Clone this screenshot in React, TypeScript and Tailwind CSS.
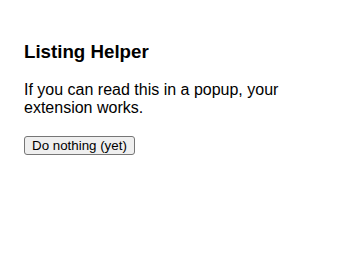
export default function App() {
  return (
    <div className="flex w-[360px] flex-col items-start px-6 pt-[41px] font-['Liberation_Sans',Arial,sans-serif] text-black">
      <h1 className="text-[18.72px] font-bold leading-[normal]">Listing Helper</h1>
      <p className="mt-[18px] text-[16px] leading-[normal]">
        If you can read this in a popup, your extension works.
      </p>
      <button
        className="mt-[19px] rounded-[3px] border border-[#767676] bg-[#efefef] px-[7px] py-[1px] text-[13.33px] leading-[normal] hover:bg-[#e5e5e5]"
        type="button"
      >
        Do nothing (yet)
      </button>
    </div>
  );
}
